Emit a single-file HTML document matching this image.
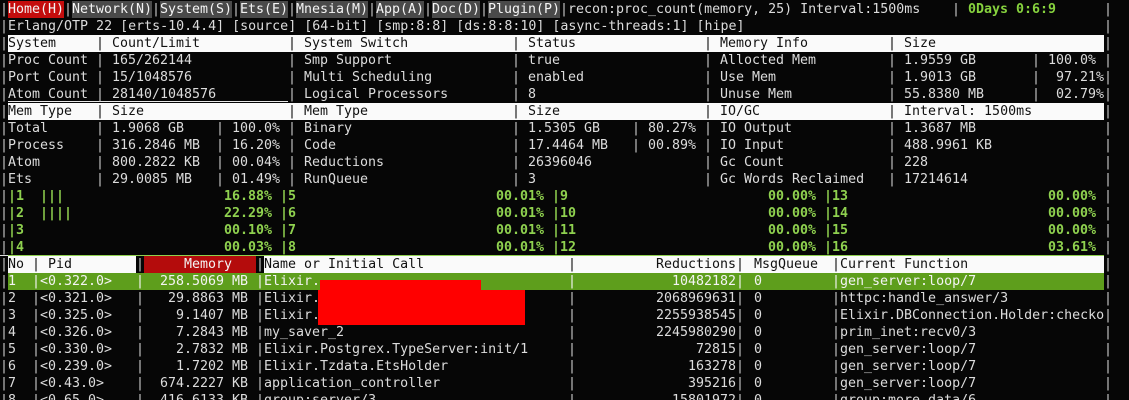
<!DOCTYPE html>
<html><head><meta charset="utf-8">
<style>
html,body{margin:0;padding:0;background:#050505;}
#t{position:relative;width:1129px;height:400px;overflow:hidden;background:#060606;font-family:"DejaVu Sans Mono","Liberation Mono",monospace;font-size:13.3px;line-height:17px;color:#dcdcdc;}
#in{position:absolute;left:0;top:1px;width:1129px;height:400px;}
.r{position:absolute;left:0;width:1129px;height:17px;}
.r i{position:absolute;top:0;font-style:normal;white-space:pre;}
.b{position:absolute;top:0;height:17px;}
.s{color:#c8c8c8}
.k{color:#111}
.g{color:#8fd14f;font-weight:bold}
.w{color:#f4f4f4}
.rt{text-align:right}
</style></head><body><div id="t"><div id="in">

<div class="r" style="top:0">
<div class="b" style="left:8px;width:56px;background:#c40d0d"></div>
<div class="b" style="left:72px;width:80px;background:#4a4a4a"></div>
<div class="b" style="left:160px;width:72px;background:#4a4a4a"></div>
<div class="b" style="left:240px;width:48px;background:#4a4a4a"></div>
<div class="b" style="left:296px;width:72px;background:#4a4a4a"></div>
<div class="b" style="left:376px;width:48px;background:#4a4a4a"></div>
<div class="b" style="left:432px;width:48px;background:#4a4a4a"></div>
<div class="b" style="left:488px;width:72px;background:#4a4a4a"></div>
<i class="s" style="left:0">|</i><i class="w" style="left:8px">Home(H)</i>
<i class="s" style="left:64px">|</i><i class="w" style="left:72px">Network(N)</i>
<i class="s" style="left:152px">|</i><i class="w" style="left:160px">System(S)</i>
<i class="s" style="left:232px">|</i><i class="w" style="left:240px">Ets(E)</i>
<i class="s" style="left:288px">|</i><i class="w" style="left:296px">Mnesia(M)</i>
<i class="s" style="left:368px">|</i><i class="w" style="left:376px">App(A)</i>
<i class="s" style="left:424px">|</i><i class="w" style="left:432px">Doc(D)</i>
<i class="s" style="left:480px">|</i><i class="w" style="left:488px">Plugin(P)</i>
<i class="s" style="left:560px">|</i><i style="left:568px">recon:proc_count(memory, 25) Interval:1500ms</i>
<i class="s" style="left:952px">|</i><i class="g" style="left:968px;color:#86d23e">0Days 0:6:9</i>
<i class="s" style="left:1104px">|</i>
</div>

<div class="r" style="top:17px">
<i class="s" style="left:0">|</i><i style="left:8px">Erlang/OTP 22 [erts-10.4.4] [source] [64-bit] [smp:8:8] [ds:8:8:10] [async-threads:1] [hipe]</i>
<i class="s" style="left:1104px">|</i>
</div>

<div class="r" style="top:34px">
<div class="b" style="left:8px;width:1096px;background:#fafafa"></div>
<i class="s" style="left:0">|</i>
<i class="k" style="left:8px">System</i><i class="k" style="left:96px">|</i><i class="k" style="left:112px">Count/Limit</i>
<i class="k" style="left:288px">|</i><i class="k" style="left:304px">System Switch</i>
<i class="k" style="left:512px">|</i><i class="k" style="left:528px">Status</i>
<i class="k" style="left:704px">|</i><i class="k" style="left:720px">Memory Info</i>
<i class="k" style="left:888px">|</i><i class="k" style="left:904px">Size</i>
<i class="s" style="left:1104px">|</i>
</div>

<div class="r" style="top:51px">
<i class="s" style="left:0">|</i><i style="left:8px">Proc Count</i><i class="s" style="left:96px">|</i><i style="left:112px">165/262144</i>
<i class="s" style="left:288px">|</i><i style="left:304px">Smp Support</i><i class="s" style="left:512px">|</i><i style="left:528px">true</i>
<i class="s" style="left:704px">|</i><i style="left:720px">Allocted Mem</i><i class="s" style="left:888px">|</i><i style="left:904px">1.9559 GB</i>
<i class="s" style="left:1032px">|</i><i style="left:1048px">100.0%</i><i class="s" style="left:1104px">|</i>
</div>
<div class="r" style="top:68px">
<i class="s" style="left:0">|</i><i style="left:8px">Port Count</i><i class="s" style="left:96px">|</i><i style="left:112px">15/1048576</i>
<i class="s" style="left:288px">|</i><i style="left:304px">Multi Scheduling</i><i class="s" style="left:512px">|</i><i style="left:528px">enabled</i>
<i class="s" style="left:704px">|</i><i style="left:720px">Use Mem</i><i class="s" style="left:888px">|</i><i style="left:904px">1.9013 GB</i>
<i class="s" style="left:1032px">|</i><i style="left:1056px">97.21%</i><i class="s" style="left:1104px">|</i>
</div>
<div class="r" style="top:85px">
<div class="b" style="left:8px;width:280px;top:15px;height:1px;background:#e8e8e8"></div>
<i class="s" style="left:0">|</i><i style="left:8px">Atom Count</i><i class="s" style="left:96px">|</i><i style="left:112px">28140/1048576</i>
<i class="s" style="left:288px">|</i><i style="left:304px">Logical Processors</i><i class="s" style="left:512px">|</i><i style="left:528px">8</i>
<i class="s" style="left:704px">|</i><i style="left:720px">Unuse Mem</i><i class="s" style="left:888px">|</i><i style="left:904px">55.8380 MB</i>
<i class="s" style="left:1032px">|</i><i style="left:1056px">02.79%</i><i class="s" style="left:1104px">|</i>
</div>

<div class="r" style="top:102px">
<div class="b" style="left:8px;width:1096px;background:#fafafa"></div>
<i class="s" style="left:0">|</i>
<i class="k" style="left:8px">Mem Type</i><i class="k" style="left:96px">|</i><i class="k" style="left:112px">Size</i>
<i class="k" style="left:288px">|</i><i class="k" style="left:304px">Mem Type</i>
<i class="k" style="left:512px">|</i><i class="k" style="left:528px">Size</i>
<i class="k" style="left:704px">|</i><i class="k" style="left:720px">IO/GC</i>
<i class="k" style="left:888px">|</i><i class="k" style="left:904px">Interval: 1500ms</i>
<i class="s" style="left:1104px">|</i>
</div>

<div class="r" style="top:119px">
<i class="s" style="left:0">|</i><i style="left:8px">Total</i><i class="s" style="left:96px">|</i><i style="left:112px">1.9068 GB</i><i class="s" style="left:216px">|</i><i style="left:232px">100.0%</i>
<i class="s" style="left:288px">|</i><i style="left:304px">Binary</i><i class="s" style="left:512px">|</i><i style="left:528px">1.5305 GB</i><i class="s" style="left:632px">|</i><i style="left:648px">80.27%</i>
<i class="s" style="left:704px">|</i><i style="left:720px">IO Output</i><i class="s" style="left:888px">|</i><i style="left:904px">1.3687 MB</i><i class="s" style="left:1104px">|</i>
</div>
<div class="r" style="top:136px">
<i class="s" style="left:0">|</i><i style="left:8px">Process</i><i class="s" style="left:96px">|</i><i style="left:112px">316.2846 MB</i><i class="s" style="left:216px">|</i><i style="left:232px">16.20%</i>
<i class="s" style="left:288px">|</i><i style="left:304px">Code</i><i class="s" style="left:512px">|</i><i style="left:528px">17.4464 MB</i><i class="s" style="left:632px">|</i><i style="left:648px">00.89%</i>
<i class="s" style="left:704px">|</i><i style="left:720px">IO Input</i><i class="s" style="left:888px">|</i><i style="left:904px">488.9961 KB</i><i class="s" style="left:1104px">|</i>
</div>
<div class="r" style="top:153px">
<i class="s" style="left:0">|</i><i style="left:8px">Atom</i><i class="s" style="left:96px">|</i><i style="left:112px">800.2822 KB</i><i class="s" style="left:216px">|</i><i style="left:232px">00.04%</i>
<i class="s" style="left:288px">|</i><i style="left:304px">Reductions</i><i class="s" style="left:512px">|</i><i style="left:528px">26396046</i>
<i class="s" style="left:704px">|</i><i style="left:720px">Gc Count</i><i class="s" style="left:888px">|</i><i style="left:904px">228</i><i class="s" style="left:1104px">|</i>
</div>
<div class="r" style="top:170px">
<i class="s" style="left:0">|</i><i style="left:8px">Ets</i><i class="s" style="left:96px">|</i><i style="left:112px">29.0085 MB</i><i class="s" style="left:216px">|</i><i style="left:232px">01.49%</i>
<i class="s" style="left:288px">|</i><i style="left:304px">RunQueue</i><i class="s" style="left:512px">|</i><i style="left:528px">3</i>
<i class="s" style="left:704px">|</i><i style="left:720px">Gc Words Reclaimed</i><i class="s" style="left:888px">|</i><i style="left:904px">17214614</i><i class="s" style="left:1104px">|</i>
</div>

<div class="r" style="top:187px">
<i class="s" style="left:0">|</i><i class="g" style="left:8px">|1</i><i class="g" style="left:40px">|||</i><i class="g" style="left:224px">16.88%</i>
<i class="g" style="left:280px">|5</i><i class="g" style="left:496px">00.01%</i><i class="g" style="left:552px">|9</i><i class="g" style="left:768px">00.00%</i>
<i class="g" style="left:824px">|13</i><i class="g" style="left:1048px">00.00%</i><i class="s" style="left:1104px">|</i>
</div>
<div class="r" style="top:204px">
<i class="s" style="left:0">|</i><i class="g" style="left:8px">|2</i><i class="g" style="left:40px">||||</i><i class="g" style="left:224px">22.29%</i>
<i class="g" style="left:280px">|6</i><i class="g" style="left:496px">00.01%</i><i class="g" style="left:552px">|10</i><i class="g" style="left:768px">00.00%</i>
<i class="g" style="left:824px">|14</i><i class="g" style="left:1048px">00.00%</i><i class="s" style="left:1104px">|</i>
</div>
<div class="r" style="top:221px">
<i class="s" style="left:0">|</i><i class="g" style="left:8px">|3</i><i class="g" style="left:224px">00.10%</i>
<i class="g" style="left:280px">|7</i><i class="g" style="left:496px">00.01%</i><i class="g" style="left:552px">|11</i><i class="g" style="left:768px">00.00%</i>
<i class="g" style="left:824px">|15</i><i class="g" style="left:1048px">00.00%</i><i class="s" style="left:1104px">|</i>
</div>
<div class="r" style="top:238px">
<div class="b" style="left:8px;width:1096px;top:16px;height:1px;background:#8fd14f"></div>
<div class="b" style="left:0;width:8px;top:16px;height:1px;background:#ddd"></div>
<i class="s" style="left:0">|</i><i class="g" style="left:8px">|4</i><i class="g" style="left:224px">00.03%</i>
<i class="g" style="left:280px">|8</i><i class="g" style="left:496px">00.01%</i><i class="g" style="left:552px">|12</i><i class="g" style="left:768px">00.00%</i>
<i class="g" style="left:824px">|16</i><i class="g" style="left:1048px">03.61%</i><i class="s" style="left:1104px">|</i>
</div>

<div class="r" style="top:255px">
<div class="b" style="left:8px;width:128px;background:#fafafa"></div>
<div class="b" style="left:144px;width:112px;background:#b40c0c"></div>
<div class="b" style="left:264px;width:840px;background:#fafafa"></div>
<i class="s" style="left:0">|</i><i class="k" style="left:8px">No</i><i class="k" style="left:32px">|</i><i class="k" style="left:48px">Pid</i>
<i class="s" style="left:136px">|</i><i class="w" style="left:184px">Memory</i><i class="s" style="left:256px">|</i>
<i class="k" style="left:264px">Name or Initial Call</i><i class="k" style="left:568px">|</i>
<i class="k rt" style="left:576px;width:160px">Reductions</i><i class="k" style="left:736px">|</i><i class="k" style="left:754px">MsgQueue</i>
<i class="k" style="left:832px">|</i><i class="k" style="left:840px">Current Function</i><i class="s" style="left:1104px">|</i>
</div>

<div class="r" style="top:272px">
<div class="b" style="left:8px;width:1096px;background:#5e9e1c"></div>
<i class="s" style="left:0">|</i><i class="w" style="left:8px">1</i><i class="w" style="left:32px">|</i><i class="w" style="left:40px">&lt;0.322.0&gt;</i><i class="w" style="left:136px">|</i>
<i class="w rt" style="left:144px;width:104px">258.5069 MB</i><i class="w" style="left:256px">|</i><i class="w" style="left:264px">Elixir.</i><i class="w" style="left:568px">|</i>
<i class="w rt" style="left:576px;width:160px">10482182</i><i class="w" style="left:736px">|</i><i class="w" style="left:754px">0</i><i class="w" style="left:832px">|</i><i class="w" style="left:840px">gen_server:loop/7</i><i class="s" style="left:1104px">|</i>
</div>
<div class="r" style="top:289px">
<i class="s" style="left:0">|</i><i style="left:8px">2</i><i class="s" style="left:32px">|</i><i style="left:40px">&lt;0.321.0&gt;</i><i class="s" style="left:136px">|</i>
<i class="rt" style="left:144px;width:104px">29.8863 MB</i><i class="s" style="left:256px">|</i><i style="left:264px">Elixir.</i><i class="s" style="left:568px">|</i>
<i class="rt" style="left:576px;width:160px">2068969631</i><i class="s" style="left:736px">|</i><i style="left:754px">0</i><i class="s" style="left:832px">|</i><i style="left:840px">httpc:handle_answer/3</i><i class="s" style="left:1104px">|</i>
</div>
<div class="r" style="top:306px">
<i class="s" style="left:0">|</i><i style="left:8px">3</i><i class="s" style="left:32px">|</i><i style="left:40px">&lt;0.325.0&gt;</i><i class="s" style="left:136px">|</i>
<i class="rt" style="left:144px;width:104px">9.1407 MB</i><i class="s" style="left:256px">|</i><i style="left:264px">Elixir.</i><i class="s" style="left:568px">|</i>
<i class="rt" style="left:576px;width:160px">2255938545</i><i class="s" style="left:736px">|</i><i style="left:754px">0</i><i class="s" style="left:832px">|</i><i style="left:840px">Elixir.DBConnection.Holder:checko</i><i class="s" style="left:1104px">|</i>
</div>
<div class="r" style="top:323px">
<i class="s" style="left:0">|</i><i style="left:8px">4</i><i class="s" style="left:32px">|</i><i style="left:40px">&lt;0.326.0&gt;</i><i class="s" style="left:136px">|</i>
<i class="rt" style="left:144px;width:104px">7.2843 MB</i><i class="s" style="left:256px">|</i><i style="left:264px">my_saver_2</i><i class="s" style="left:568px">|</i>
<i class="rt" style="left:576px;width:160px">2245980290</i><i class="s" style="left:736px">|</i><i style="left:754px">0</i><i class="s" style="left:832px">|</i><i style="left:840px">prim_inet:recv0/3</i><i class="s" style="left:1104px">|</i>
</div>
<div class="r" style="top:340px">
<i class="s" style="left:0">|</i><i style="left:8px">5</i><i class="s" style="left:32px">|</i><i style="left:40px">&lt;0.330.0&gt;</i><i class="s" style="left:136px">|</i>
<i class="rt" style="left:144px;width:104px">2.7832 MB</i><i class="s" style="left:256px">|</i><i style="left:264px">Elixir.Postgrex.TypeServer:init/1</i><i class="s" style="left:568px">|</i>
<i class="rt" style="left:576px;width:160px">72815</i><i class="s" style="left:736px">|</i><i style="left:754px">0</i><i class="s" style="left:832px">|</i><i style="left:840px">gen_server:loop/7</i><i class="s" style="left:1104px">|</i>
</div>
<div class="r" style="top:357px">
<i class="s" style="left:0">|</i><i style="left:8px">6</i><i class="s" style="left:32px">|</i><i style="left:40px">&lt;0.239.0&gt;</i><i class="s" style="left:136px">|</i>
<i class="rt" style="left:144px;width:104px">1.7202 MB</i><i class="s" style="left:256px">|</i><i style="left:264px">Elixir.Tzdata.EtsHolder</i><i class="s" style="left:568px">|</i>
<i class="rt" style="left:576px;width:160px">163278</i><i class="s" style="left:736px">|</i><i style="left:754px">0</i><i class="s" style="left:832px">|</i><i style="left:840px">gen_server:loop/7</i><i class="s" style="left:1104px">|</i>
</div>
<div class="r" style="top:374px">
<i class="s" style="left:0">|</i><i style="left:8px">7</i><i class="s" style="left:32px">|</i><i style="left:40px">&lt;0.43.0&gt;</i><i class="s" style="left:136px">|</i>
<i class="rt" style="left:144px;width:104px">674.2227 KB</i><i class="s" style="left:256px">|</i><i style="left:264px">application_controller</i><i class="s" style="left:568px">|</i>
<i class="rt" style="left:576px;width:160px">395216</i><i class="s" style="left:736px">|</i><i style="left:754px">0</i><i class="s" style="left:832px">|</i><i style="left:840px">gen_server:loop/7</i><i class="s" style="left:1104px">|</i>
</div>
<div class="r" style="top:391px">
<i class="s" style="left:0">|</i><i style="left:8px">8</i><i class="s" style="left:32px">|</i><i style="left:40px">&lt;0.65.0&gt;</i><i class="s" style="left:136px">|</i>
<i class="rt" style="left:144px;width:104px">416.6133 KB</i><i class="s" style="left:256px">|</i><i style="left:264px">group:server/3</i><i class="s" style="left:568px">|</i>
<i class="rt" style="left:576px;width:160px">15801972</i><i class="s" style="left:736px">|</i><i style="left:754px">0</i><i class="s" style="left:832px">|</i><i style="left:840px">group:more_data/6</i><i class="s" style="left:1104px">|</i>
</div>

<div style="position:absolute;left:320px;top:279px;width:161px;height:12px;background:#ff0000"></div>
<div style="position:absolute;left:318px;top:289px;width:207px;height:35px;background:#ff0000"></div>

</div></div></body></html>
